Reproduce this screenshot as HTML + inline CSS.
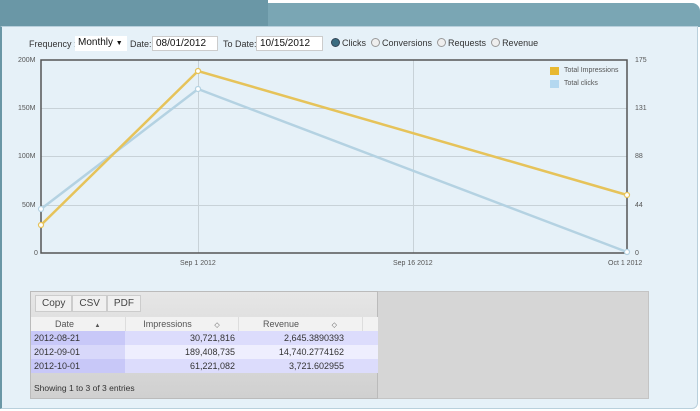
<!DOCTYPE html>
<html><head><style>
*{margin:0;padding:0;box-sizing:border-box}
body{width:700px;height:411px;overflow:hidden;background:#fff;font-family:"Liberation Sans",sans-serif;position:relative}
.hd1{position:absolute;left:0;top:0;width:268px;height:27px;background:#6a97a6}
.hd2{position:absolute;left:268px;top:3px;width:432px;height:24px;background:#7aa6b4;border-radius:0 8px 0 0}
.panel{position:absolute;left:0;top:26px;width:698px;height:383px;background:#e6f1f8;border:1px solid #b9d0dc;border-left:2px solid #6a97a6;border-radius:0 0 6px 0}
.t{position:absolute;font-size:9px;color:#333;white-space:nowrap}
.inp{position:absolute;background:#fff;border:1px solid #ccc;font-size:10px;color:#111;padding:1px 3px;height:15px}
.radio{display:inline-block;width:9px;height:9px;border-radius:50%;border:1px solid #999;background:#eee;vertical-align:-1px;margin-right:2px}
.ax{position:absolute;font-size:7px;color:#555}
table{border-collapse:collapse;font-size:9px;color:#333}
</style></head><body>
<div class="hd1"></div><div class="hd2"></div>
<div class="panel"></div>
<div class="t" style="left:29px;top:39px">Frequency :</div>
<div class="inp" style="left:75px;top:36px;width:52px;border:none">Monthly <span style="font-size:7px">▼</span></div>
<div class="t" style="left:130px;top:39px">Date:</div>
<div class="inp" style="left:152px;top:36px;width:66px">08/01/2012</div>
<div class="t" style="left:223px;top:39px">To Date:</div>
<div class="inp" style="left:256px;top:36px;width:67px">10/15/2012</div>
<div class="t" style="left:331px;top:38px"><span class="radio" style="background:#3a6c80;border-color:#345"></span>Clicks &nbsp;<span class="radio"></span>Conversions &nbsp;<span class="radio"></span>Requests &nbsp;<span class="radio"></span>Revenue</div>
<svg style="position:absolute;left:0;top:0" width="700" height="290">
<g stroke="#c8d2d8" stroke-width="1">
<line x1="41" y1="108.5" x2="627" y2="108.5"/><line x1="41" y1="156.5" x2="627" y2="156.5"/><line x1="41" y1="205.5" x2="627" y2="205.5"/>
<line x1="198.5" y1="60" x2="198.5" y2="253"/><line x1="413.5" y1="60" x2="413.5" y2="253"/>
</g>
<rect x="41" y="60" width="586" height="193" fill="none" stroke="#555" stroke-width="1.5"/>
<polyline points="41,209 198,89 627,252" fill="none" stroke="#b4d2e2" stroke-width="2.5"/>
<polyline points="41,225 198,71 627,195" fill="none" stroke="#e6c35a" stroke-width="2.5"/>
<g fill="#fff" stroke-width="1.2">
<circle cx="41" cy="209" r="2.5" stroke="#b4d2e2"/><circle cx="198" cy="89" r="2.5" stroke="#b4d2e2"/><circle cx="627" cy="252" r="2.5" stroke="#b4d2e2"/>
<circle cx="41" cy="225" r="2.5" stroke="#e6c35a"/><circle cx="198" cy="71" r="2.5" stroke="#e6c35a"/><circle cx="627" cy="195" r="2.5" stroke="#e6c35a"/>
</g>
<rect x="550" y="67" width="9" height="8" fill="#e8b830"/>
<rect x="550" y="80" width="9" height="8" fill="#b4d8f0"/>
</svg>
<div class="ax" style="left:564px;top:67px">Total Impressions</div>
<div class="ax" style="left:564px;top:80px">Total clicks</div>
<div class="ax" style="left:18px;top:57px">200M</div>
<div class="ax" style="left:18px;top:105px">150M</div>
<div class="ax" style="left:18px;top:153px">100M</div>
<div class="ax" style="left:22px;top:202px">50M</div>
<div class="ax" style="left:34px;top:250px">0</div>
<div class="ax" style="left:635px;top:57px">175</div>
<div class="ax" style="left:635px;top:105px">131</div>
<div class="ax" style="left:635px;top:153px">88</div>
<div class="ax" style="left:635px;top:202px">44</div>
<div class="ax" style="left:635px;top:250px">0</div>
<div class="ax" style="left:180px;top:260px">Sep 1 2012</div>
<div class="ax" style="left:393px;top:260px">Sep 16 2012</div>
<div class="ax" style="left:608px;top:260px">Oct 1 2012</div>
<div style="position:absolute;left:30px;top:291px;width:619px;height:108px;background:#d6d6d6;border:1px solid #c4c4c4"></div>
<div style="position:absolute;left:30px;top:291px;width:348px;height:108px;background:linear-gradient(#e6e6e6,#d0d0d0);border:1px solid #bbb"></div>
<div style="position:absolute;left:35px;top:295px;display:flex;font-size:10px;color:#444">
<div style="background:#f0f0f0;border:1px solid #ccc;padding:2px 6px">Copy</div><div style="background:#f0f0f0;border:1px solid #ccc;padding:2px 6px">CSV</div><div style="background:#f0f0f0;border:1px solid #ccc;padding:2px 6px">PDF</div></div>
<table style="position:absolute;left:31px;top:317px;width:347px">
<tr style="background:#f2f2f2;height:14px;color:#555"><td style="width:94px;text-align:center">Date <span style="font-size:6px;margin-left:18px">▲</span></td><td style="width:113px;text-align:center;border-left:1px solid #ddd">Impressions <span style="font-size:7px;margin-left:20px">◇</span></td><td style="width:124px;text-align:center;border-left:1px solid #ddd">Revenue <span style="font-size:7px;margin-left:30px">◇</span></td><td style="border-left:1px solid #ddd"></td></tr>
<tr style="height:14px;background:#dcdcfc"><td style="background:#c8c8f8;padding-left:3px">2012-08-21</td><td style="text-align:right;padding-right:3px">30,721,816</td><td style="text-align:right;padding-right:18px">2,645.3890393</td><td></td></tr>
<tr style="height:14px;background:#eeeefe"><td style="background:#d8d8fa;padding-left:3px">2012-09-01</td><td style="text-align:right;padding-right:3px">189,408,735</td><td style="text-align:right;padding-right:18px">14,740.2774162</td><td></td></tr>
<tr style="height:14px;background:#dcdcfc"><td style="background:#c8c8f8;padding-left:3px">2012-10-01</td><td style="text-align:right;padding-right:3px">61,221,082</td><td style="text-align:right;padding-right:18px">3,721.602955</td><td></td></tr>
</table>
<div class="t" style="left:34px;top:383px;font-size:8.5px">Showing 1 to 3 of 3 entries</div>
</body></html>
